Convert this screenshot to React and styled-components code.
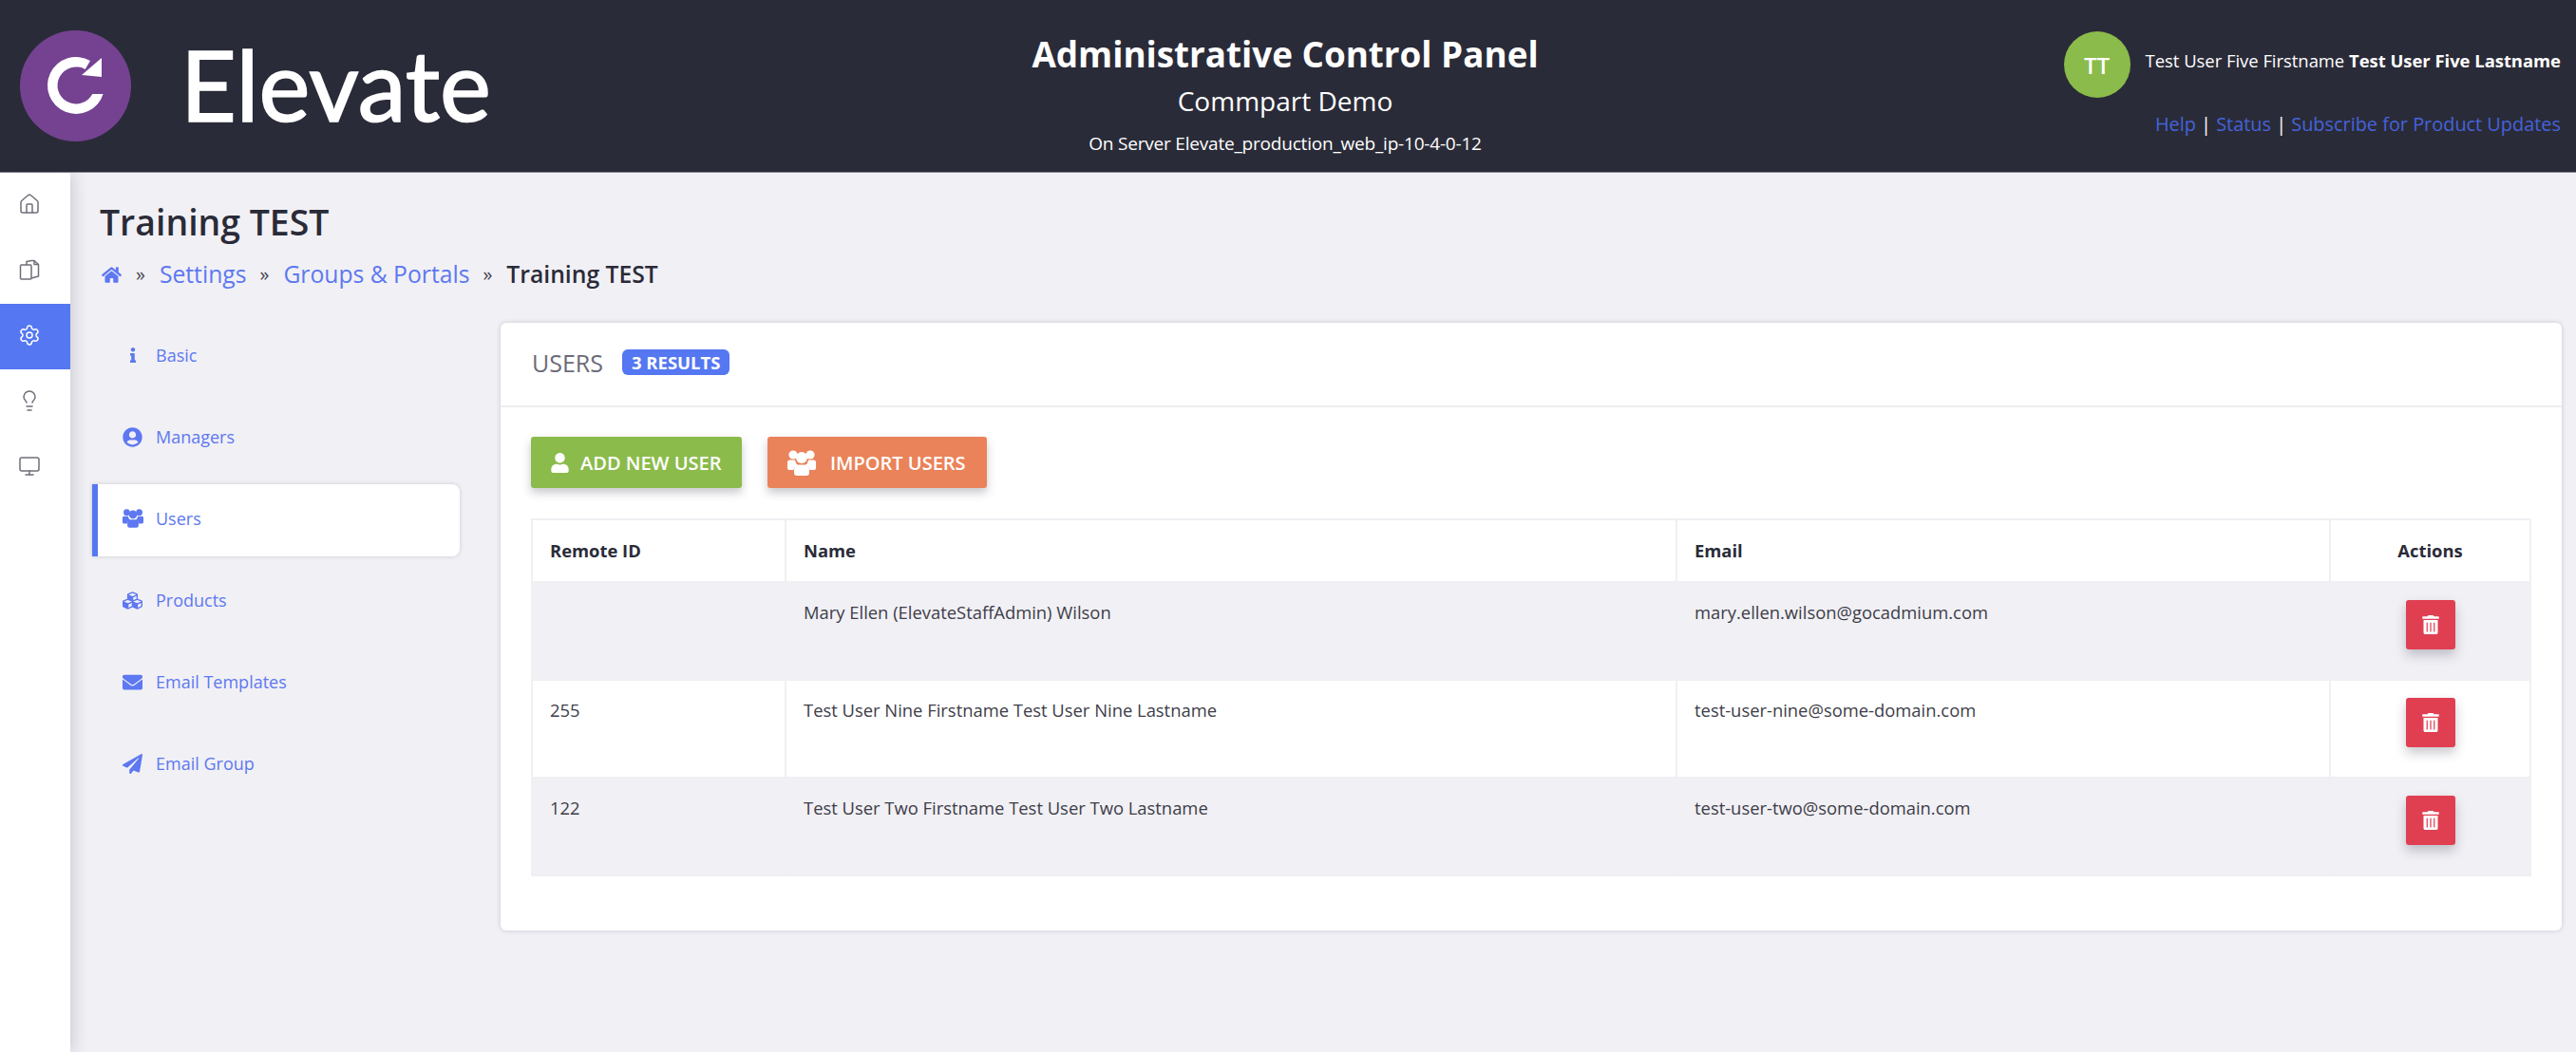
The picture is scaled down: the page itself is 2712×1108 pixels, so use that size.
import React from "react";
import styled, { createGlobalStyle } from "styled-components";
import { FaHome, FaInfo, FaUserCircle, FaCubes, FaEnvelope, FaPaperPlane, FaUser, FaTrashAlt } from "react-icons/fa";
import { Home, Settings, Lightbulb, Monitor } from "lucide-react";

const Global = createGlobalStyle`
  html, body { margin: 0; padding: 0; background: #f1f0f5; }
  body { font-family: "Open Sans", "Noto Sans", sans-serif; color: #2a2b38; }
  * { box-sizing: border-box; }
`;

const Page = styled.div`
  min-height: 1108px;
  display: flex;
  flex-direction: column;
`;

const Header = styled.header`
  height: 182px;
  background: #2a2b38;
  border-bottom: 1px solid #8a8a94;
  display: grid;
  grid-template-columns: 1fr auto 1fr;
  color: #fff;
`;

const Brand = styled.div`
  display: flex;
  align-items: flex-start;
  padding: 32px 0 0 21px;
`;

const BrandName = styled.div`
  font-family: "Lato", sans-serif;
  font-weight: 400;
  font-size: 102px;
  line-height: 125px;
  margin-left: 52px;
  margin-top: -6px;
  -webkit-text-stroke: 1.6px #fff;
`;

const Center = styled.div`
  display: flex;
  flex-direction: column;
  align-items: center;
  padding-right: 6px;
`;

const CenterTitle = styled.div`
  font-weight: 700;
  font-size: 36.8px;
  line-height: 48px;
  margin-top: 33px;
`;

const CenterSub = styled.div`
  font-size: 28px;
  line-height: 38px;
  margin-top: 6px;
`;

const CenterServer = styled.div`
  font-size: 19px;
  line-height: 26px;
  margin-top: 13px;
  letter-spacing: -0.2px;
`;

const UserBlock = styled.div`
  display: flex;
  flex-direction: column;
  align-items: flex-end;
  padding: 33px 16px 0 0;
`;

const UserRow = styled.div`
  display: flex;
  align-items: flex-start;
`;

const Avatar = styled.div`
  width: 70px;
  height: 70px;
  border-radius: 50%;
  background: #8bbb4b;
  display: flex;
  align-items: center;
  justify-content: center;
  font-size: 24px;
  font-weight: 600;
  margin-right: 16px;
`;

const UserName = styled.div`
  font-size: 18.4px;
  line-height: 24px;
  margin-top: 19px;
  white-space: nowrap;
  strong { font-weight: 700; }
`;

const Links = styled.div`
  font-size: 19.9px;
  line-height: 26px;
  margin-top: 15px;
  color: #fff;
  white-space: nowrap;
`;

const TopLink = styled.span`
  color: #4463dc;
`;

const Body = styled.div`
  flex: 1;
  display: flex;
`;

const Rail = styled.nav`
  width: 74px;
  flex: none;
  background: #fff;
  box-shadow: 4px 0 14px rgba(40, 40, 60, 0.16);
  position: relative;
  z-index: 1;
  display: flex;
  flex-direction: column;
`;

const RailItem = styled.div`
  height: 69px;
  display: flex;
  align-items: center;
  justify-content: center;
  padding: 0 12px 3px 0;
  color: ${(p) => (p.$active ? "#fff" : "#6f6f7a")};
  background: ${(p) => (p.$active ? "#5577f2" : "transparent")};
`;

const Content = styled.main`
  flex: 1;
  min-width: 0;
  padding: 27px 15px 0 23px;
`;

const PageTitle = styled.h1`
  margin: 0 0 0 8px;
  font-size: 37.4px;
  line-height: 50px;
  font-weight: 600;
  color: #2a2b38;
`;

const Crumbs = styled.div`
  display: flex;
  align-items: center;
  margin: 13px 0 0 10px;
  font-size: 24.7px;
  line-height: 34px;
  height: 34px;
`;

const CrumbLink = styled.span`
  color: #5d78f0;
`;

const CrumbIcon = styled(CrumbLink)`
  display: flex;
  font-size: 21px;
  margin-right: 1px;
`;

const CrumbSep = styled.span`
  font-size: 20px;
  color: #44444f;
  margin: 0 15px 0 14px;
`;

const CrumbCurrent = styled.span`
  font-weight: 600;
  color: #2a2b38;
`;

const Columns = styled.div`
  display: flex;
  align-items: flex-start;
  margin-top: 26px;
`;

const Tabs = styled.div`
  width: 387px;
  flex: none;
  margin-right: 43px;
  display: flex;
  flex-direction: column;
`;

const Tab = styled.div`
  height: 86px;
  display: flex;
  align-items: center;
  padding: 0 0 2px 30px;
  font-size: 18px;
  color: #5d78f0;
  border-radius: 0 8px 8px 0;
`;

const ActiveTab = styled(Tab)`
  height: 76px;
  margin: 6px 0 4px;
  padding: 0 0 4px 24px;
  background: #fff;
  border-left: 6px solid #5577f2;
  box-shadow: 0 0 4px rgba(40, 40, 60, 0.2);
`;

const TabIcon = styled.span`
  width: 37px;
  flex: none;
  display: flex;
  justify-content: center;
  padding-right: 12px;
  font-size: ${(p) => p.$size || 21}px;
`;

const Card = styled.section`
  flex: 1;
  min-width: 0;
  height: 640px;
  margin-top: 8px;
  background: #fff;
  border-radius: 6px;
  box-shadow: 0 0 5px rgba(40, 40, 60, 0.2);
`;

const CardHead = styled.div`
  height: 89px;
  border-bottom: 2px solid #eeeef1;
  display: flex;
  align-items: center;
  padding: 0 0 4px 33px;
`;

const CardTitle = styled.div`
  font-size: 25px;
  color: #6b6b78;
`;

const Badge = styled.span`
  margin-left: 20px;
  height: 27px;
  padding: 0 10px;
  display: flex;
  align-items: center;
  border-radius: 6px;
  background: #5577f2;
  color: #fff;
  font-size: 18.5px;
  font-weight: 700;
`;

const CardBody = styled.div`
  padding: 31px 33px 0 32px;
`;

const Toolbar = styled.div`
  display: flex;
  gap: 27px;
`;

const ActionButton = styled.div`
  height: 54px;
  width: ${(p) => p.$w}px;
  display: flex;
  align-items: center;
  padding-left: ${(p) => p.$pad}px;
  border-radius: 3px;
  background: ${(p) => p.$bg};
  color: #fff;
  font-size: 20px;
  font-weight: 600;
  white-space: nowrap;
  box-shadow: 0 5px 10px rgba(40, 40, 60, 0.25);
  svg { flex: none; margin-right: ${(p) => p.$gap}px; }
`;

const Table = styled.table`
  width: 2104px;
  margin-top: 32px;
  border-collapse: collapse;
  table-layout: fixed;
  font-size: 18.4px;
`;

const Th = styled.th`
  height: 66px;
  border: 2px solid #f0f0f3;
  padding: 0 18px 2px;
  font-size: 18.4px;
  font-weight: 700;
  text-align: ${(p) => (p.$center ? "center" : "left")};
  color: #2a2b38;
`;

const Row = styled.tr`
  background: ${(p) => (p.$odd ? "#f1f0f5" : "#fff")};
`;

const Td = styled.td`
  height: 103px;
  border: 2px solid #f0f0f3;
  padding: 18px 18px 0;
  vertical-align: top;
  color: #3d3d48;
  line-height: 25px;
`;

const ActionCell = styled.td`
  height: 103px;
  border: 2px solid #f0f0f3;
  padding: 18px 0 0;
  text-align: center;
  vertical-align: top;
`;

const DeleteButton = styled.div`
  width: 52px;
  height: 52px;
  margin: 0 auto;
  border-radius: 3px;
  background: #e03f52;
  color: #fff;
  display: flex;
  align-items: center;
  justify-content: center;
  font-size: 20px;
  box-shadow: 0 6px 12px rgba(40, 40, 60, 0.25);
`;

const rows = [
  ["", "Mary Ellen (ElevateStaffAdmin) Wilson", "mary.ellen.wilson@gocadmium.com"],
  ["255", "Test User Nine Firstname Test User Nine Lastname", "test-user-nine@some-domain.com"],
  ["122", "Test User Two Firstname Test User Two Lastname", "test-user-two@some-domain.com"],
];

const Logo = () => (
  <svg width="117" height="117" viewBox="0 0 117 117">
    <circle cx="58.5" cy="58.5" r="58.5" fill="#744291" />
    <path d="M87.6 67 A30 30 0 1 1 74 32 L68.7 41 A19.5 19.5 0 1 0 76.3 67 Z" fill="#fff" />
    <path d="M86 29 V49 L65 47 Z" fill="#fff" />
  </svg>
);

const FilesIcon = () => (
  <svg width="24" height="24" viewBox="0 0 24 24" fill="none" stroke="currentColor" strokeWidth="1.5" strokeLinejoin="round">
    <rect x="2.5" y="7" width="11.5" height="15" rx="1" />
    <path d="M9 7 V3.5 L14 2.5 H17 L21.5 6.5 V19 L14 21" />
    <path d="M17 2.5 V6.5 H21.5" />
  </svg>
);

const UsersGlyph = ({ size }) => (
  <svg width={size} height={size * 0.9} viewBox="0 0 30 27" fill="currentColor">
    <circle cx="6" cy="5" r="4.6" />
    <circle cx="24" cy="5" r="4.6" />
    <circle cx="15" cy="8" r="6" />
    <path d="M0 12.5 Q0 10.5 2.5 10.5 H8 Q8.5 14 11 16 Q7 17 6.5 21 H2 Q0 21 0 19 Z" />
    <path d="M30 12.5 Q30 10.5 27.5 10.5 H22 Q21.5 14 19 16 Q23 17 23.5 21 H28 Q30 21 30 19 Z" />
    <path d="M12 15.5 H18 Q23 15.5 23 20.5 V24 Q23 27 20 27 H10 Q7 27 7 24 V20.5 Q7 15.5 12 15.5 Z" />
  </svg>
);

export default function App() {
  return (
    <Page>
      <Global />
      <Header>
        <Brand>
          <Logo />
          <BrandName>Elevate</BrandName>
        </Brand>
        <Center>
          <CenterTitle>Administrative Control Panel</CenterTitle>
          <CenterSub>Commpart Demo</CenterSub>
          <CenterServer>On Server Elevate_production_web_ip-10-4-0-12</CenterServer>
        </Center>
        <UserBlock>
          <UserRow>
            <Avatar>TT</Avatar>
            <UserName>
              Test User Five Firstname <strong>Test User Five Lastname</strong>
            </UserName>
          </UserRow>
          <Links>
            <TopLink>Help</TopLink> | <TopLink>Status</TopLink> | <TopLink>Subscribe for Product Updates</TopLink>
          </Links>
        </UserBlock>
      </Header>
      <Body>
        <Rail>
          <RailItem><Home size={24} strokeWidth={1.5} /></RailItem>
          <RailItem><FilesIcon /></RailItem>
          <RailItem $active><Settings size={24} strokeWidth={1.5} /></RailItem>
          <RailItem><Lightbulb size={24} strokeWidth={1.5} /></RailItem>
          <RailItem><Monitor size={24} strokeWidth={1.5} /></RailItem>
        </Rail>
        <Content>
          <PageTitle>Training TEST</PageTitle>
          <Crumbs>
            <CrumbIcon><FaHome /></CrumbIcon>
            <CrumbSep>»</CrumbSep>
            <CrumbLink>Settings</CrumbLink>
            <CrumbSep>»</CrumbSep>
            <CrumbLink>Groups &amp; Portals</CrumbLink>
            <CrumbSep>»</CrumbSep>
            <CrumbCurrent>Training TEST</CrumbCurrent>
          </Crumbs>
          <Columns>
            <Tabs>
              <Tab><TabIcon $size={16}><FaInfo /></TabIcon>Basic</Tab>
              <Tab><TabIcon><FaUserCircle /></TabIcon>Managers</Tab>
              <ActiveTab><TabIcon><UsersGlyph size={22} /></TabIcon>Users</ActiveTab>
              <Tab><TabIcon><FaCubes /></TabIcon>Products</Tab>
              <Tab><TabIcon><FaEnvelope /></TabIcon>Email Templates</Tab>
              <Tab><TabIcon><FaPaperPlane /></TabIcon>Email Group</Tab>
            </Tabs>
            <Card>
              <CardHead>
                <CardTitle>USERS</CardTitle>
                <Badge>3 RESULTS</Badge>
              </CardHead>
              <CardBody>
                <Toolbar>
                  <ActionButton $w={222} $pad={20} $bg="#8bbb4b" $gap={11}><FaUser size={21} />ADD NEW USER</ActionButton>
                  <ActionButton $w={231} $pad={21} $bg="#ea8359" $gap={15}><UsersGlyph size={30} />IMPORT USERS</ActionButton>
                </Toolbar>
                <Table>
                  <colgroup>
                    <col style={{ width: 267 }} />
                    <col style={{ width: 938 }} />
                    <col style={{ width: 688 }} />
                    <col style={{ width: 211 }} />
                  </colgroup>
                  <thead>
                    <tr>
                      <Th>Remote ID</Th>
                      <Th>Name</Th>
                      <Th>Email</Th>
                      <Th $center>Actions</Th>
                    </tr>
                  </thead>
                  <tbody>
                    {rows.map((r, i) => (
                      <Row key={r[2]} $odd={i % 2 === 0}>
                        <Td>{r[0]}</Td>
                        <Td>{r[1]}</Td>
                        <Td>{r[2]}</Td>
                        <ActionCell><DeleteButton><FaTrashAlt /></DeleteButton></ActionCell>
                      </Row>
                    ))}
                  </tbody>
                </Table>
              </CardBody>
            </Card>
          </Columns>
        </Content>
      </Body>
    </Page>
  );
}
